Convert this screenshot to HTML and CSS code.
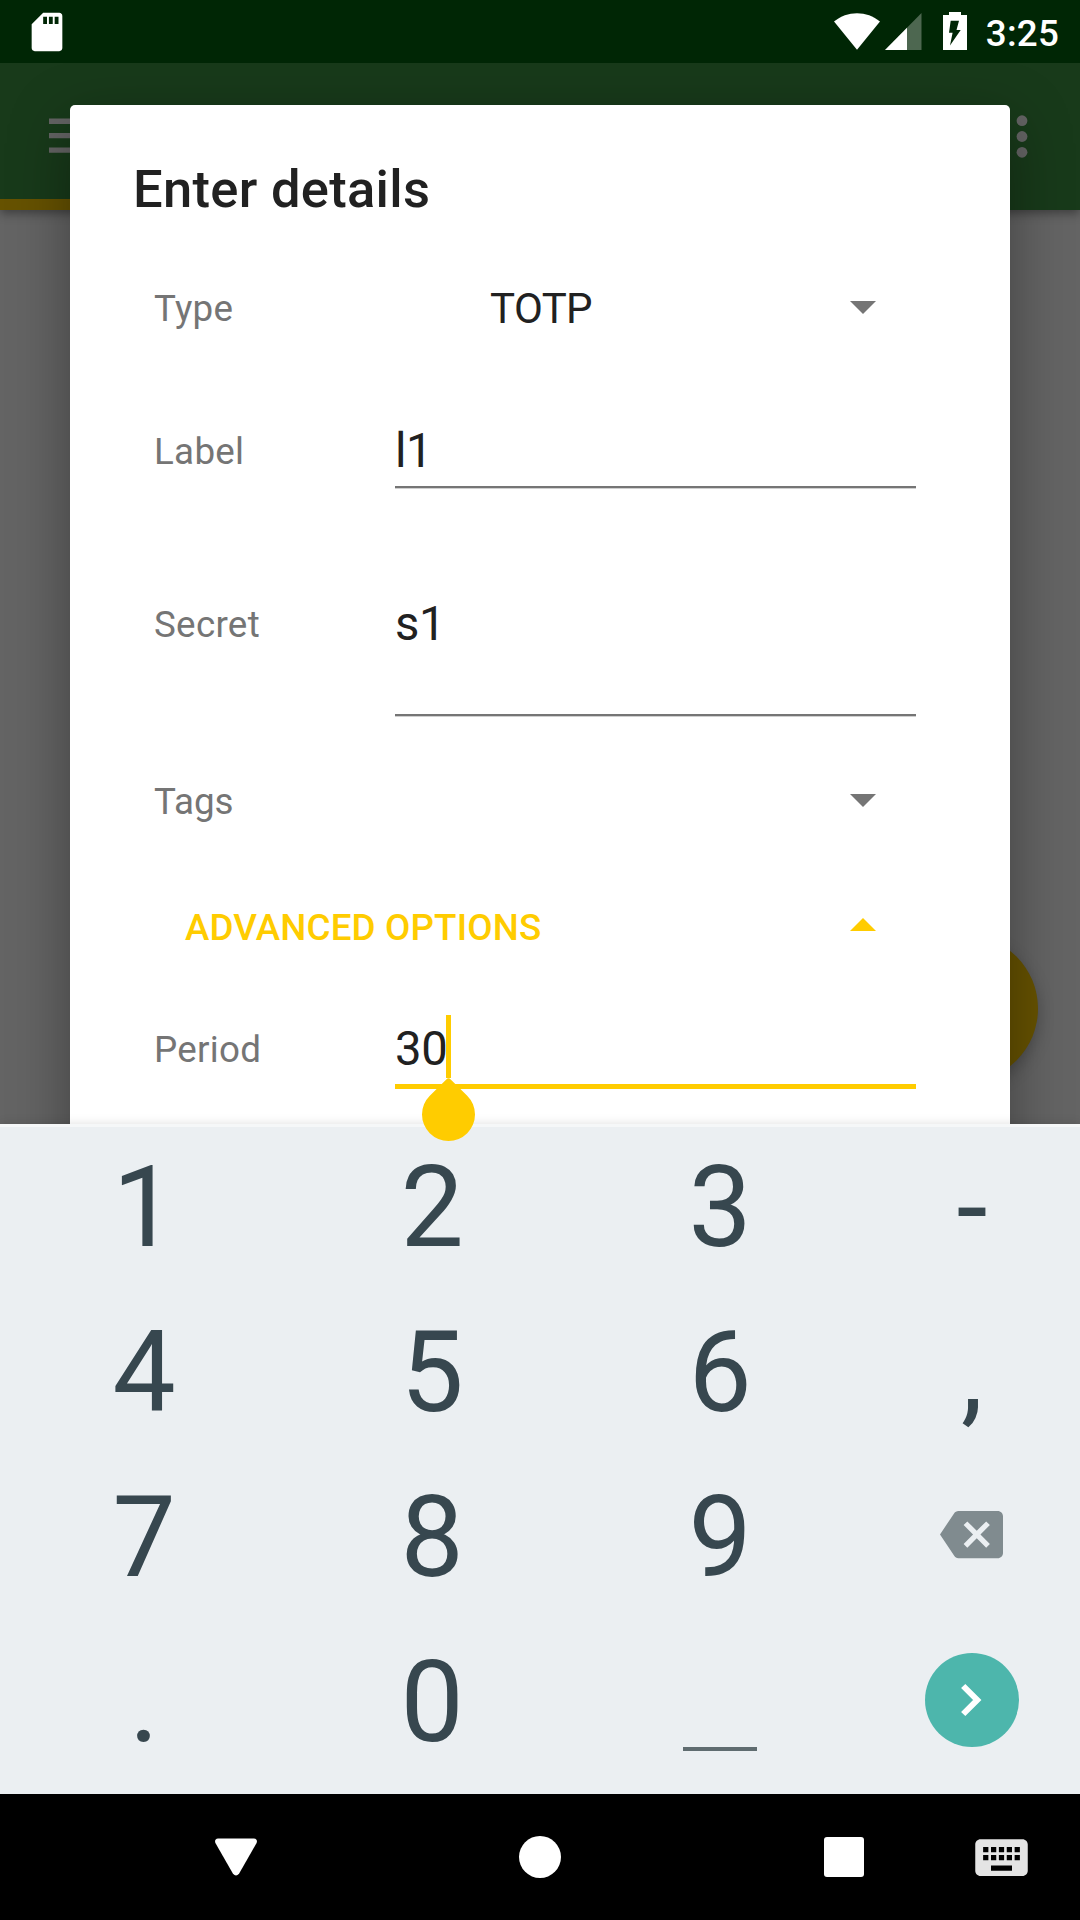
FILE: index.html
```html
<!DOCTYPE html>
<html lang="en">
<head>
<meta charset="utf-8">
<title>Enter details</title>
<link rel="stylesheet" href="styles.css">
</head>
<body>
<div class="screen">
  <header class="status">
    <svg class="sd" viewBox="0 0 24 24"><path d="M18 2h-8L4 8v12.400c0 .9.700 1.600 1.600 1.600h12.800c.9 0 1.600-.7 1.600-1.600V3.600c0-.9-.7-1.600-1.600-1.600zm-6 5.800h-2V4h2zm3 0h-2V4h2zm3 0h-2V4h2z"/></svg>
    <div class="indicators">
      <svg class="wifi" viewBox="0 0 46 37"><path d="M0 8.500C13-2.600 33-2.600 46 8.500L23 36.700z"/></svg>
      <svg class="signal" viewBox="0 0 37 37"><path d="M36.500 0v37H0z" opacity=".3"/><path d="M22 14.700V37H0z"/></svg>
      <svg class="battery" viewBox="0 0 24 38"><path fill-rule="evenodd" d="M6 0h12v3h6v35H0V3h6zM7.700 8.800L6 20.700h3.600L7 33.500 17.700 18h-4.200L16 8.800z"/></svg>
      <span class="clock">3:25</span>
    </div>
  </header>

  <main class="app">
    <div class="toolbar">
      <svg class="menu" viewBox="0 0 48 36"><path d="M0 .5h48v5.500H0zM0 15h48v5.300H0zM0 29.500h48v5.300H0z"/></svg>
      <svg class="more" viewBox="0 0 12 43"><circle cx="6" cy="5.700" r="5.400"/><circle cx="6" cy="21.500" r="5.400"/><circle cx="6" cy="37.300" r="5.400"/></svg>
      <div class="tab-indicator"></div>
    </div>
    <div class="fab"></div>

    <section class="dialog">
      <h1>Enter details</h1>
      <div class="row type">
        <span class="label">Type</span>
        <div class="spinner"><span>TOTP</span><svg class="arrow" viewBox="0 0 26 13"><path d="M0 0h26L13 13z"/></svg></div>
      </div>
      <div class="row name">
        <span class="label">Label</span>
        <div class="input">l1</div>
      </div>
      <div class="row secret">
        <span class="label">Secret</span>
        <div class="input tall">s1</div>
      </div>
      <div class="row tags">
        <span class="label">Tags</span>
        <div class="spinner"><span></span><svg class="arrow" viewBox="0 0 26 13"><path d="M0 0h26L13 13z"/></svg></div>
      </div>
      <div class="advanced"><span>ADVANCED OPTIONS</span><svg class="arrow" viewBox="0 0 26 13"><path d="M0 13h26L13 0z"/></svg></div>
      <div class="row period">
        <span class="label">Period</span>
        <div class="input focused">30<i class="caret"></i></div>
      </div>
    </section>
  </main>

  <svg class="handle" viewBox="0 0 54 64"><path d="M27.500 1.200q1.200 0 2.200 1.200L46.200 18.700A26.500 26.500 0 1 1 8.800 18.700L25.300 2.400q1-1.200 2.200-1.200z"/></svg>

  <section class="keyboard">
    <div class="key">1</div><div class="key">2</div><div class="key">3</div><div class="key">-</div>
    <div class="key">4</div><div class="key">5</div><div class="key">6</div><div class="key">,</div>
    <div class="key">7</div><div class="key">8</div><div class="key">9</div>
    <div class="key icon"><svg class="backspace" viewBox="0 0 24 24"><path d="M22 3H7c-.69 0-1.230.35-1.590.88L0 12l5.410 8.110c.36.53.9.89 1.590.89h15c1.100 0 2-.9 2-2V5c0-1.100-.9-2-2-2zm-3 12.590L17.590 17 14 13.410 10.410 17 9 15.590 12.590 12 9 8.410 10.410 7 14 10.590 17.590 7 19 8.410 15.410 12z"/></svg></div>
    <div class="key">.</div><div class="key">0</div>
    <div class="key icon space"><i></i></div>
    <div class="key icon"><span class="enter"><svg viewBox="0 0 94 94"><path d="M38.200 33L52.200 47 38.200 61"/></svg></span></div>
  </section>

  <nav class="navbar">
    <svg class="back" viewBox="0 0 42 38"><path d="M3 .5h36q4 .6 2.600 4.500L24 35.800q-3 3.500-6 0L.4 5Q-1 1.100 3 .5z"/></svg>
    <span class="home"></span>
    <span class="recent"></span>
    <svg class="ime" viewBox="0 0 24 24"><path d="M20 5H4c-1.100 0-2 .9-2 2v10c0 1.100.9 2 2 2h16c1.100 0 2-.9 2-2V7c0-1.100-.9-2-2-2zm-9 3h2v2h-2zm0 3h2v2h-2zM8 8h2v2H8zm0 3h2v2H8zm-1 2H5v-2h2zm0-3H5V8h2zm9 7H8v-2h8zm0-4h-2v-2h2zm0-3h-2V8h2zm3 3h-2v-2h2zm0-3h-2V8h2z"/></svg>
  </nav>
</div>
</body>
</html>
```
FILE: styles.css
```css
* { box-sizing: border-box; }

body {
  margin: 0;
  font-family: Roboto, sans-serif;
  color: #212121;
}

svg { display: block; flex: none; }

.screen {
  position: relative;
  display: flex;
  flex-direction: column;
  width: 1080px;
  height: 1920px;
  overflow: hidden;
}

/* status bar */
.status {
  display: flex;
  justify-content: space-between;
  height: 63px;
  padding: 0 21px 0 24.400px;
  background: #002605;
  color: #fff;
  fill: #fff;
}
.sd { width: 46px; height: 46px; margin-top: 8.500px; }
.indicators { display: flex; }
.wifi { width: 46px; height: 37px; margin-top: 12.500px; }
.signal { width: 37px; height: 37px; margin: 13px 0 0 5px; }
.battery { width: 24px; height: 38px; margin: 12px 0 0 21px; }
.clock {
  margin-left: 19px;
  font-size: 36.750px;
  font-weight: 500;
  line-height: 67px;
  letter-spacing: .2px;
}

/* dimmed app behind the dialog */
.app {
  position: relative;
  height: 1061px;
  overflow: hidden;
  background: #646464;
}
.toolbar {
  position: relative;
  display: flex;
  justify-content: space-between;
  height: 147px;
  padding: 52px 52px 0 48.500px;
  background: #183a1a;
  fill: #646464;
  box-shadow: 0 3px 10px rgba(0, 0, 0, .4);
}
.menu { width: 48px; height: 36px; margin-top: 3px; }
.more { width: 12px; height: 43px; }
.tab-indicator {
  position: absolute;
  left: 0;
  bottom: 0;
  width: 540px;
  height: 11px;
  background: #665200;
}
.fab {
  position: absolute;
  right: 42px;
  bottom: 42px;
  width: 147px;
  height: 147px;
  border-radius: 50%;
  background: #665200;
  box-shadow: 0 6px 16px rgba(0, 0, 0, .25);
}

/* dialog */
.dialog {
  position: absolute;
  left: 70px;
  top: 42px;
  width: 940px;
  height: 1100px;
  padding: 0 63px;
  border-radius: 5px;
  background: #fff;
  box-shadow: 0 18px 60px rgba(0, 0, 0, .36);
}
h1 {
  height: 140px;
  margin: 0;
  font-size: 52.500px;
  font-weight: 500;
  line-height: 62px;
  letter-spacing: .3px;
  padding-top: 53px;
}
.row {
  display: grid;
  grid-template-columns: 241px 521px;
  align-items: center;
  margin-left: 21px;
}
.type { height: 127px; }
.name { height: 158px; }
.secret { height: 188px; }
.tags { height: 167px; }
.period { height: 157px; }
.label {
  font-size: 36.750px;
  line-height: 43px;
  letter-spacing: .3px;
  color: #757575;
}
.tags .label { letter-spacing: 0; }
.period .label { padding-top: 2px; }
.spinner {
  display: flex;
  align-items: center;
  justify-content: space-between;
  padding: 0 40px 0 95px;
  font-size: 42px;
  letter-spacing: -.6px;
  fill: #757575;
}
.arrow { width: 26px; height: 13px; }
.spinner .arrow { margin-bottom: 2px; }
.input {
  display: flex;
  align-items: center;
  height: 74px;
  padding-top: 2px;
  border-bottom: 2px solid #757575;
  box-shadow: 0 1px #cfcfcf;
  font-size: 47.250px;
  letter-spacing: -.4px;
}
.input.tall { height: 184px; }
.input.focused {
  height: 81px;
  padding-top: 5px;
  border-bottom: 5px solid #fc0;
  box-shadow: none;
}
.caret {
  position: relative;
  top: -2px;
  width: 5px;
  height: 63px;
  margin: 0 0 0 -1px;
  background: #fc0;
}
.advanced {
  display: flex;
  align-items: center;
  justify-content: space-between;
  height: 85px;
  padding: 0 71px 0 52px;
  font-size: 36.750px;
  font-weight: 500;
  letter-spacing: .15px;
  color: #fc0;
  fill: #fc0;
}
.advanced .arrow { margin-bottom: 6px; }

.handle {
  position: absolute;
  z-index: 2;
  left: 421px;
  top: 1077px;
  width: 54px;
  height: 64px;
  fill: #fc0;
}

/* keyboard */
.keyboard {
  position: relative;
  display: grid;
  grid-template-columns: repeat(3, 288px) 216px;
  grid-template-rows: 160px repeat(3, 165px);
  align-items: end;
  height: 670px;
  border-top: 3px solid #f5f7f8;
  background: #ebeff2;
  box-shadow: 0 0 10px rgba(0, 0, 0, .13);
  color: #37474f;
}
.key {
  height: 165px;
  padding-top: 3px;
  font-size: 112.500px;
  line-height: 165px;
  text-align: center;
}
.key.icon {
  display: flex;
  align-items: center;
  justify-content: center;
  padding: 0;
}
.backspace { width: 63px; height: 63px; margin-right: 2px; fill: #808b8f; }
.space i {
  width: 74px;
  height: 4px;
  margin-top: 99px;
  background: #5f6c70;
}
.enter {
  width: 94px;
  height: 94px;
  border-radius: 50%;
  background: #4db6ac;
}
.enter path { fill: none; stroke: #fff; stroke-width: 6; }

/* navigation bar */
.navbar {
  display: flex;
  align-items: center;
  height: 126px;
  padding-left: 215px;
  background: #000;
  fill: #fff;
}
.back { width: 42px; height: 38px; }
.home {
  width: 42px;
  height: 42px;
  margin-left: 262px;
  border-radius: 50%;
  background: #fff;
}
.recent {
  width: 40px;
  height: 40px;
  margin-left: 263px;
  border-radius: 3px;
  background: #fff;
}
.ime { width: 63px; height: 63px; margin-left: 106px; fill: #e4e4e4; }
```
